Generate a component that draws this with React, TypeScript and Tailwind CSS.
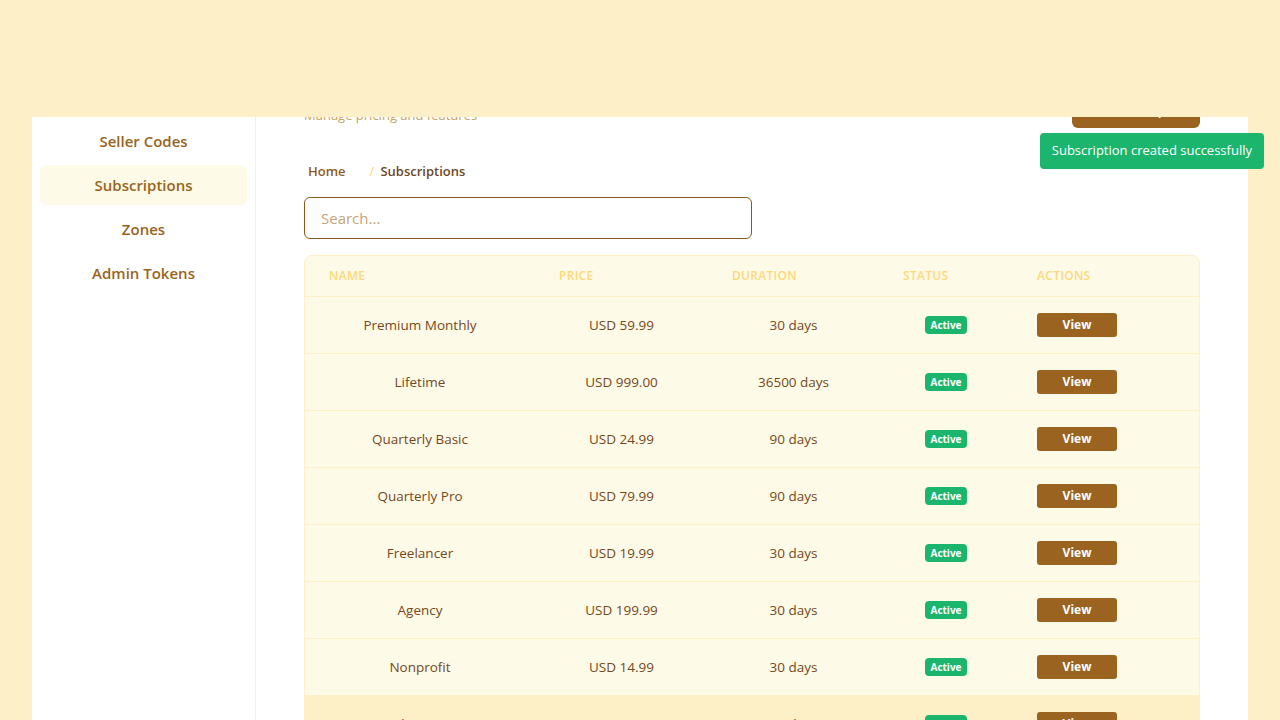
import React from "react";

const plans = [
  { name: "Premium Monthly", price: "USD 59.99", duration: "30 days" },
  { name: "Lifetime", price: "USD 999.00", duration: "36500 days" },
  { name: "Quarterly Basic", price: "USD 24.99", duration: "90 days" },
  { name: "Quarterly Pro", price: "USD 79.99", duration: "90 days" },
  { name: "Freelancer", price: "USD 19.99", duration: "30 days" },
  { name: "Agency", price: "USD 199.99", duration: "30 days" },
  { name: "Nonprofit", price: "USD 14.99", duration: "30 days" },
  { name: "Education", price: "USD 9.99", duration: "30 days" },
  { name: "Starter", price: "USD 4.99", duration: "30 days" },
];

const navItems = ["Dashboard", "Sellers", "Seller Codes", "Subscriptions", "Zones", "Admin Tokens"];

const App = () => {
  return (
    <div
      className="min-h-screen h-[720px] overflow-hidden bg-[#fdefc7] px-8"
      style={{ fontFamily: '"Open Sans", "Noto Sans", sans-serif' }}
    >
      {/* Top bar (sticky, page is scrolled under it) */}
      <div className="fixed top-0 left-0 right-0 h-[117px] bg-[#fdefc7] z-20" />

      {/* Toast */}
      <div className="fixed top-[133px] right-4 z-30 h-9 px-3 flex items-center rounded bg-[#1bb56e] text-white text-[13px]">
        Subscription created successfully
      </div>

      <div className="flex bg-white min-h-[720px]">
        {/* Sidebar */}
        <aside className="w-56 shrink-0 border-r border-[#fdefc7] pt-[33px] px-2">
          <nav className="flex flex-col gap-1">
            {navItems.map((item) => (
              <div
                key={item}
                className={`h-10 flex items-center justify-center rounded-md text-[15px] font-semibold text-[#9a6420] ${
                  item === "Subscriptions" ? "bg-[#fefae8]" : ""
                }`}
              >
                {item}
              </div>
            ))}
          </nav>
        </aside>

        {/* Main */}
        <main className="flex-1 px-12 pt-[69px]">
          <div className="flex justify-between items-end mb-[33px]">
            <div className="pb-[3px]">
              <h1 className="text-2xl font-bold text-[#7a4f1e] leading-9">Subscriptions</h1>
              <p className="text-[13px] leading-5 text-[#c9a35a]">Manage pricing and features</p>
            </div>
            <button className="w-32 h-9 rounded-md bg-[#9a6420] text-white text-sm font-semibold">
              Add Subscription
            </button>
          </div>

          {/* Breadcrumb */}
          <div className="flex items-center text-[13px] leading-5">
            <span className="ml-1 font-semibold text-[#8f5d20]">Home</span>
            <span className="ml-[24px] mr-[6px] text-[#fcd97a]">/</span>
            <span className="font-semibold text-[#6b4a1f]">Subscriptions</span>
          </div>

          {/* Search */}
          <input
            className="mt-4 w-[448px] h-[42px] px-4 rounded-md border border-[#8a5a1c] text-[15px] text-[#6b4a1f] placeholder:text-[#c4a57a] outline-none"
            placeholder="Search..."
          />

          {/* Table */}
          <div className="mt-4 border border-[#fdefc6] rounded-lg bg-[#fefae8] overflow-hidden">
            <div className="grid grid-cols-[230px_173px_171px_134px_1fr] h-[41px] items-center border-b border-[#fdefc6] text-xs font-semibold uppercase tracking-wide text-[#fcd97a]">
              <div className="pl-6">Name</div>
              <div className="pl-6">Price</div>
              <div className="pl-6">Duration</div>
              <div className="pl-6">Status</div>
              <div className="pl-6">Actions</div>
            </div>
            {plans.map((p, i) => (
              <div
                key={p.name}
                className={`grid grid-cols-[230px_173px_171px_134px_1fr] h-[57px] items-center border-b border-[#fdefc6] text-[13.5px] text-[#74491a] ${
                  i === 7 ? "bg-[#fdefc6]" : ""
                }`}
              >
                <div className="text-center">{p.name}</div>
                <div className="text-center">{p.price}</div>
                <div className="text-center">{p.duration}</div>
                <div className="flex justify-center">
                  <span className="h-[18px] w-[42px] flex items-center justify-center rounded bg-[#1bb56e] text-white text-[10px] font-bold">
                    Active
                  </span>
                </div>
                <div className="pl-6">
                  <button className="w-20 h-6 rounded-[3px] bg-[#9a6420] text-white text-xs font-bold">
                    View
                  </button>
                </div>
              </div>
            ))}
          </div>
        </main>
      </div>
    </div>
  );
};

export default App;
